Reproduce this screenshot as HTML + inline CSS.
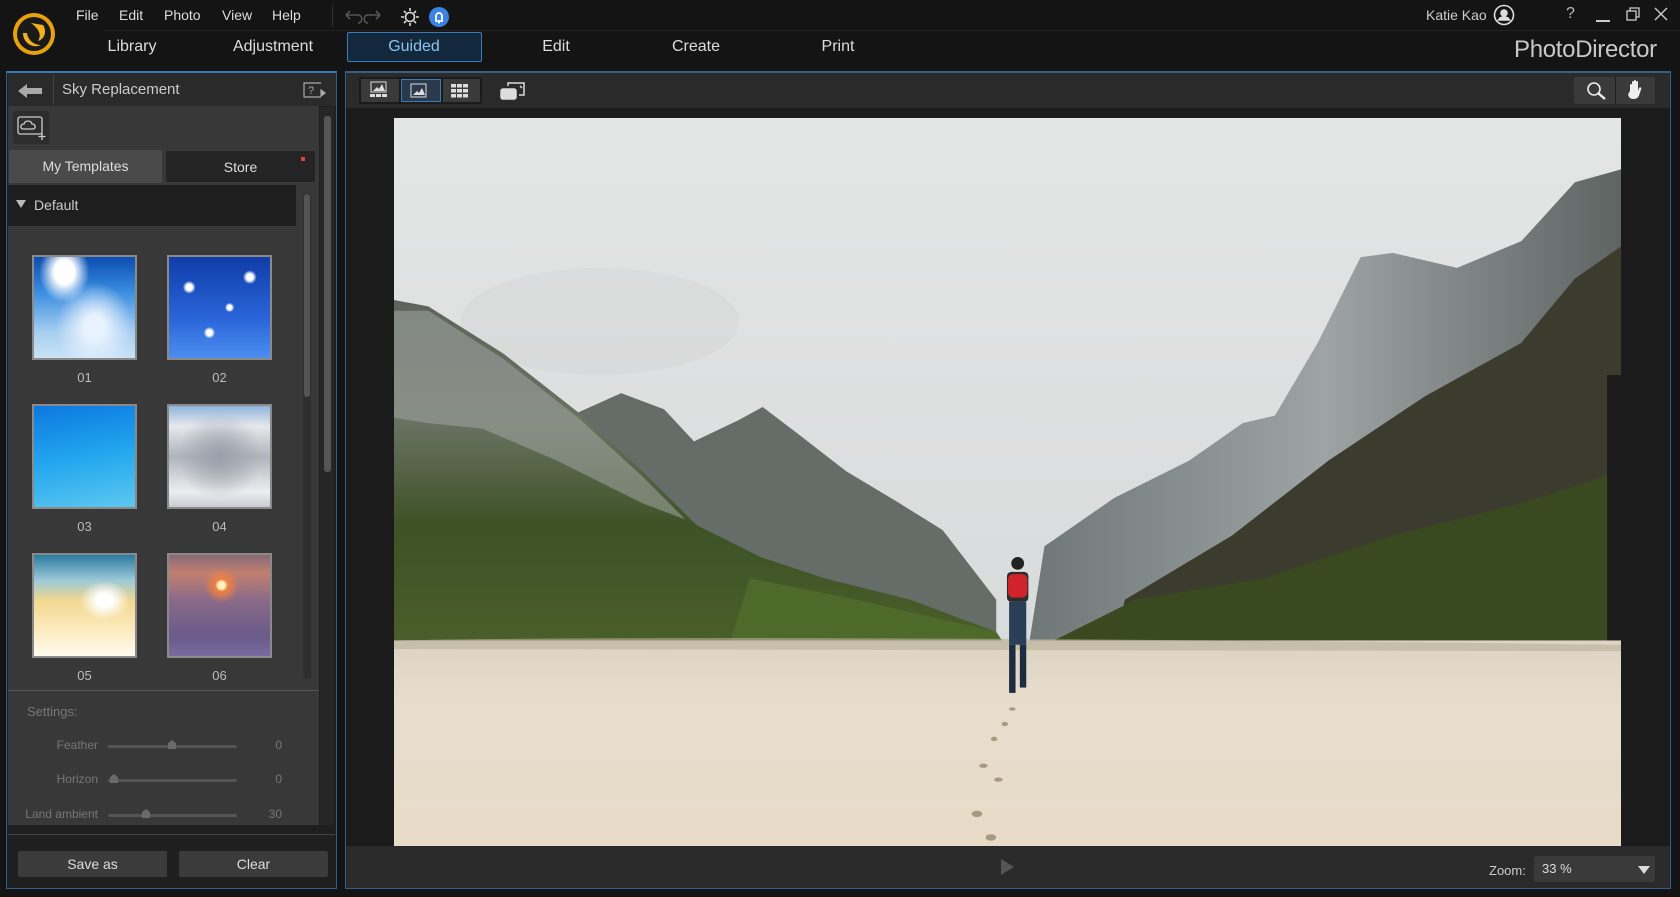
<!DOCTYPE html>
<html><head><meta charset="utf-8"><style>
*{margin:0;padding:0;box-sizing:border-box}
body{width:1680px;height:897px;background:#141414;font-family:"Liberation Sans",sans-serif;color:#ddd;position:relative;overflow:hidden}
.a{position:absolute}
.menu{top:7px;font-size:14px;color:#ddd}
.tab{top:38px;font-size:16px;color:#ddd;transform:translateX(-50%)}
.thumb{position:absolute;width:105px;height:105px;border:2px solid #8a8a8a}
.lbl{position:absolute;font-size:13px;color:#bbb;width:105px;text-align:center}
.sl{position:absolute;left:108px;width:129px;height:3px;background:#555;border-radius:2px}
.knob{position:absolute;width:8px;height:9px;background:#6a6a6a;top:-5px;clip-path:polygon(50% 0,100% 35%,100% 100%,0 100%,0 35%)}
.sn{position:absolute;font-size:12px;color:#777;text-align:right;width:80px;left:18px}
.sv{position:absolute;font-size:12px;color:#777;left:260px;width:22px;text-align:right}
.btn{position:absolute;background:#3b3b3b;border-radius:2px;font-size:14px;color:#ddd;text-align:center;line-height:26px}
</style></head><body>
<svg class="a" style="left:11px;top:11px" width="46" height="46" viewBox="0 0 46 46">
<circle cx="23" cy="23" r="21" fill="#e8a20c"/><circle cx="23" cy="23" r="17" fill="#1a1a1a"/>
<path d="M12 22 C12 32 22 38 30 34 C24 34 17 30 16 22Z" fill="#f2b01e"/>
<path d="M20 12 L32 14 C36 20 34 28 27 30 C31 24 28 18 20 12Z" fill="#f2b01e"/>
</svg>
<div class="a menu" style="left:76px">File</div>
<div class="a menu" style="left:119px">Edit</div>
<div class="a menu" style="left:164px">Photo</div>
<div class="a menu" style="left:222px">View</div>
<div class="a menu" style="left:272px">Help</div>
<div class="a" style="left:332px;top:5px;width:1px;height:22px;background:#333"></div>
<div class="a" style="left:104px;top:30px;width:1576px;height:1px;background:#222"></div>
<svg class="a" style="left:342px;top:7px" width="110" height="20" viewBox="0 0 110 20" fill="none" stroke="#555" stroke-width="1.6">
<path d="M4 8 L16 8 C21 8 21 16 16 16 M4 8 L8 4 M4 8 L8 12"/>
<path d="M38 8 L26 8 C21 8 21 16 26 16 M38 8 L34 4 M38 8 L34 12"/>
<g stroke="#ddd"><circle cx="68" cy="10" r="4.5"/><path d="M68 1v3M68 16v3M59 10h3M74 10h3M62 4l2 2M72 14l2 2M62 16l2-2M72 6l2-2"/></g>
<circle cx="97" cy="10" r="10" fill="#3b82e6" stroke="none"/>
<path d="M93 14h8M94 13v-4a3 3 0 0 1 6 0v4M96 15.5h2" stroke="#fff" stroke-width="1.8"/>
</svg>
<div class="a tab" style="left:132px">Library</div>
<div class="a tab" style="left:273px">Adjustment</div>
<div class="a" style="left:347px;top:32px;width:135px;height:30px;border:1px solid #3d7ab8;background:#13283d;border-radius:2px"></div>
<div class="a tab" style="left:414px;color:#8fc3ef">Guided</div>
<div class="a tab" style="left:556px">Edit</div>
<div class="a tab" style="left:696px">Create</div>
<div class="a tab" style="left:838px">Print</div>
<div class="a" style="left:1426px;top:7px;font-size:14px;color:#ccc">Katie Kao</div>
<svg class="a" style="left:1493px;top:4px" width="22" height="22" viewBox="0 0 22 22" fill="none" stroke="#ddd" stroke-width="1.6"><circle cx="11" cy="11" r="9.5"/><circle cx="11" cy="9" r="3" fill="#ddd"/><path d="M5.5 16 C7 12 15 12 16.5 16Z" fill="#ddd"/></svg>
<div class="a" style="left:1566px;top:5px;font-size:16px;color:#bbb">?</div>
<div class="a" style="left:1596px;top:20px;width:14px;height:1.5px;background:#ccc"></div>
<svg class="a" style="left:1625px;top:6px" width="16" height="16" fill="none" stroke="#ccc" stroke-width="1.3"><rect x="2" y="5" width="9" height="9"/><path d="M5 5V2h9v9h-3"/></svg>
<svg class="a" style="left:1653px;top:6px" width="16" height="16" stroke="#ccc" stroke-width="1.4"><path d="M2 2L14 14M14 2L2 14"/></svg>
<div class="a" style="left:1514px;top:36px;font-size:24px;color:#c8c8c8;letter-spacing:-0.3px">PhotoDirector</div>

<div class="a" style="left:6px;top:71px;width:331px;height:818px;border:1px solid #2d5f90;border-top:2px solid #3b78b8;background:#1f1f1f"></div>
<div class="a" style="left:8px;top:73px;width:328px;height:33px;background:#2a2a2a"></div>
<div class="a" style="left:53px;top:75px;width:1px;height:30px;background:#444"></div>
<svg class="a" style="left:18px;top:84px" width="24" height="14"><path d="M0 7 L9 0 V4 H24 V10 H9 V14Z" fill="#aaa"/></svg>
<div class="a" style="left:62px;top:81px;font-size:15px;color:#ccc">Sky Replacement</div>
<svg class="a" style="left:303px;top:80px" width="24" height="20" fill="none" stroke="#aaa" stroke-width="1.2"><path d="M18 3H1v14h17"/><text x="5" y="14" font-size="11" fill="#aaa" stroke="none" font-family="Liberation Sans">?</text><path d="M18 10 l4 3 -4 3z" fill="#aaa"/></svg>
<div class="a" style="left:8px;top:106px;width:311px;height:585px;background:#383838"></div>
<div class="a" style="left:13px;top:111px;width:36px;height:33px;background:#2d2d2d;border-radius:2px"></div>
<svg class="a" style="left:17px;top:115px" width="30" height="26" fill="none" stroke="#ccc" stroke-width="1.3"><rect x="1" y="2" width="24" height="17" rx="2"/><path d="M6 14 C3 14 3 9 7 9 C8 5 14 5 15 9 C19 9 19 14 16 14Z"/><path d="M25 18v7M21.5 21.5h7"/></svg>
<div class="a" style="left:9px;top:150px;width:153px;height:33px;background:#4a4a4a;border-radius:2px 2px 0 0;font-size:14px;text-align:center;line-height:33px;color:#ddd">My Templates</div>
<div class="a" style="left:165px;top:150px;width:151px;height:33px;background:#242424;border:1px solid #3a3a3a;font-size:14px;text-align:center;line-height:33px;color:#ddd">Store</div>
<div class="a" style="left:301px;top:157px;width:4px;height:4px;background:#e04040"></div>
<div class="a" style="left:8px;top:185px;width:288px;height:41px;background:#1e1e1e"></div>
<div class="a" style="left:16px;top:200px;width:0;height:0;border-left:5px solid transparent;border-right:5px solid transparent;border-top:8px solid #bbb"></div>
<div class="a" style="left:34px;top:197px;font-size:14px;color:#ccc">Default</div>
<div class="a" style="left:303px;top:193px;width:8px;height:486px;background:#2e2e2e;border-radius:3px"></div>
<div class="a" style="left:304px;top:194px;width:6px;height:203px;background:#555;border-radius:3px"></div>
<div class="a" style="left:320px;top:107px;width:14px;height:718px;background:#262626"></div>
<div class="a" style="left:324px;top:116px;width:7px;height:356px;background:#555;border-radius:3px"></div>

<div class="thumb" style="left:32px;top:255px;background:radial-gradient(ellipse at 30% 15%,#fff 0 10%,transparent 25%),radial-gradient(ellipse at 60% 70%,#e8f2ff 0 12%,transparent 45%),linear-gradient(#0b4db0,#3b8ee0 35%,#a7cff0 75%,#c9e2f6)"></div>
<div class="thumb" style="left:167px;top:255px;background:radial-gradient(circle at 20% 30%,#fff 0 3%,transparent 6%),radial-gradient(circle at 60% 50%,#fff 0 3%,transparent 6%),radial-gradient(circle at 80% 20%,#fff 0 3%,transparent 6%),radial-gradient(circle at 40% 75%,#fff 0 3%,transparent 6%),linear-gradient(#0f3ca8,#2a64d8 60%,#4c8ef0)"></div>
<div class="lbl" style="left:32px;top:370px">01</div><div class="lbl" style="left:167px;top:370px">02</div>
<div class="thumb" style="left:32px;top:404px;background:linear-gradient(170deg,#0c78e0,#22a6ee 50%,#5cc8f0)"></div>
<div class="thumb" style="left:167px;top:404px;background:radial-gradient(ellipse at 50% 50%,#9aa0aa,transparent 60%),linear-gradient(#8fb4dc,#e6e8ec 20%,#b0b4bc 50%,#eceef0 85%,#c8ccd2)"></div>
<div class="lbl" style="left:32px;top:519px">03</div><div class="lbl" style="left:167px;top:519px">04</div>
<div class="thumb" style="left:32px;top:553px;background:radial-gradient(ellipse at 70% 45%,#fff 0 8%,transparent 25%),linear-gradient(#2a7ca0,#9cc8d8 25%,#f2d890 45%,#fbe8b8 70%,#fffbee)"></div>
<div class="thumb" style="left:167px;top:553px;background:radial-gradient(circle at 52% 30%,#fff2c0 0 4%,#f08040 7%,transparent 20%),linear-gradient(#8a6a78,#c08070 18%,#8a6a88 45%,#6a5a8a 80%,#7a6aa0)"></div>
<div class="lbl" style="left:32px;top:668px">05</div><div class="lbl" style="left:167px;top:668px">06</div>

<div class="a" style="left:8px;top:690px;width:311px;height:1px;background:#555"></div>
<div class="a" style="left:8px;top:691px;width:311px;height:134px;background:#383838"></div>
<div class="a" style="left:27px;top:704px;font-size:13px;color:#777">Settings:</div>
<div class="sn" style="top:738px">Feather</div><div class="sl" style="top:745px"><div class="knob" style="left:60px"></div></div><div class="sv" style="top:738px">0</div>
<div class="sn" style="top:772px">Horizon</div><div class="sl" style="top:779px"><div class="knob" style="left:2px"></div></div><div class="sv" style="top:772px">0</div>
<div class="sn" style="top:807px">Land ambient</div><div class="sl" style="top:814px"><div class="knob" style="left:34px"></div></div><div class="sv" style="top:807px">30</div>
<div class="a" style="left:8px;top:834px;width:327px;height:1px;background:#444"></div>
<div class="btn" style="left:18px;top:851px;width:149px">Save as</div>
<div class="btn" style="left:179px;top:851px;width:149px">Clear</div>

<div class="a" style="left:345px;top:71px;width:1326px;height:818px;border:1px solid #2d5f90;border-top:2px solid #3b5f88;background:#2a2a2a"></div>
<div class="a" style="left:359px;top:77px;width:123px;height:27px;background:#1b1b1b;border-radius:2px"></div>
<div class="a" style="left:361px;top:79px;width:38px;height:23px;background:#3a3a3a"></div>
<div class="a" style="left:401px;top:79px;width:40px;height:23px;background:#2a3a4c;border:1px solid #3d7ab8"></div>
<div class="a" style="left:443px;top:79px;width:37px;height:23px;background:#3a3a3a"></div>
<svg class="a" style="left:368px;top:81px" width="110" height="19" fill="#ddd">
<rect x="3" y="1" width="15" height="10" fill="none" stroke="#ddd"/><path d="M5 10l4-4 2 2 3-5 3 7z"/><rect x="2" y="13" width="5" height="3"/><rect x="8" y="13" width="5" height="3"/><rect x="14" y="13" width="5" height="3"/>
<rect x="43" y="3" width="15" height="13" fill="none" stroke="#ddd"/><path d="M45 14l4-4 2 2 3-5 3 7z"/>
<g><rect x="83" y="3" width="5" height="3.5"/><rect x="89" y="3" width="5" height="3.5"/><rect x="95" y="3" width="5" height="3.5"/><rect x="83" y="8" width="5" height="3.5"/><rect x="89" y="8" width="5" height="3.5"/><rect x="95" y="8" width="5" height="3.5"/><rect x="83" y="13" width="5" height="3.5"/><rect x="89" y="13" width="5" height="3.5"/><rect x="95" y="13" width="5" height="3.5"/></g>
</svg>
<svg class="a" style="left:500px;top:81px" width="26" height="20" fill="none" stroke="#ddd" stroke-width="1.5"><rect x="1" y="8" width="15" height="10" rx="2" fill="#ddd"/><path d="M8 5V2h16v12h-5"/><path d="M20 5l2 2" /></svg>
<div class="a" style="left:1574px;top:77px;width:81px;height:27px;background:#3a3a3a;border-radius:2px"></div>
<div class="a" style="left:1615px;top:77px;width:1px;height:27px;background:#1e1e1e"></div>
<svg class="a" style="left:1585px;top:80px" width="24" height="22" fill="none" stroke="#eee" stroke-width="1.6"><circle cx="9" cy="9" r="6"/><path d="M13 13l7 6" stroke-width="2.4"/></svg>
<svg class="a" style="left:1625px;top:79px" width="22" height="22" fill="#eee"><path d="M5 12V6a1 1 0 0 1 2 0v5V3a1 1 0 0 1 2 0v8V2a1 1 0 0 1 2 0v9V3a1 1 0 0 1 2 0v9l1-3a1.2 1.2 0 0 1 2.2 1l-2 6c-1 3-3 4-6 4s-5-2-5-5z"/></svg>
<div class="a" style="left:346px;top:108px;width:1324px;height:738px;background:#1b1b1b"></div>
<svg class="a" style="left:394px;top:118px" width="1227" height="728" viewBox="368 110 1145 680" preserveAspectRatio="none">
<defs>
<linearGradient id="sky" x1="0" y1="0" x2="0" y2="1"><stop offset="0" stop-color="#e4e6e6"/><stop offset="1" stop-color="#d4d7d7"/></linearGradient>
<linearGradient id="sand" x1="0" y1="0" x2="0" y2="1"><stop offset="0" stop-color="#ddd3c2"/><stop offset=".3" stop-color="#e6ddcd"/><stop offset="1" stop-color="#e8dcc8"/></linearGradient>
<linearGradient id="lg" x1="0" y1="0" x2="0" y2="1"><stop offset="0" stop-color="#5e645c"/><stop offset=".35" stop-color="#6a7262"/><stop offset=".65" stop-color="#3d5226"/><stop offset="1" stop-color="#4a5f2a"/></linearGradient>
<linearGradient id="rg" x1="0" y1="0" x2="1" y2="0"><stop offset="0" stop-color="#6e7676"/><stop offset=".5" stop-color="#9ea4a4"/><stop offset="1" stop-color="#5e6462"/></linearGradient>
</defs>
<rect x="368" y="110" width="1145" height="680" fill="url(#sky)"/>
<ellipse cx="560" cy="300" rx="130" ry="50" fill="#cdd0d0" opacity=".35"/>
<path d="M540 385 L580 367 L620 382 L648 412 L690 392 L712 380 L745 405 L790 440 L840 470 L880 495 L930 560 L930 605 L540 605Z" fill="#666c68"/>
<path d="M368 280 L400 286 L470 330 L540 385 L600 440 L650 490 L710 520 L770 540 L850 560 L930 590 L930 605 L368 605Z" fill="url(#lg)"/>
<path d="M368 290 L400 290 L470 335 L540 390 L600 445 L640 485 L600 470 L520 430 L450 400 L400 395 L368 390Z" fill="#a0a6a2" opacity=".55"/>
<path d="M960 605 L975 510 L1040 465 L1110 430 L1160 395 L1190 388 L1230 320 L1270 240 L1300 236 L1360 250 L1420 225 L1470 170 L1513 158 L1513 605Z" fill="url(#rg)"/>
<path d="M1050 560 L1150 500 L1240 430 L1330 370 L1420 320 L1470 260 L1513 230 L1513 605 L1040 605Z" fill="#3c3c2e"/>
<path d="M980 600 L1060 560 L1180 540 L1300 500 L1420 470 L1513 440 L1513 605Z" fill="#3a4a20"/>
<path d="M700 540 L800 560 L930 590 L940 605 L680 605Z" fill="#4e6a2a"/>
<rect x="1500" y="350" width="13" height="255" fill="#1b1b1b"/>
<rect x="368" y="598" width="1145" height="192" fill="url(#sand)"/>
<path d="M368 598 Q700 592 1513 602 L1513 608 L368 606Z" fill="#b9b09a" opacity=".6"/>
<g transform="translate(950 520)">
<circle cx="0" cy="6" r="6" fill="#222"/>
<rect x="-10" y="14" width="20" height="28" rx="4" fill="#2a2e30"/>
<rect x="-9" y="16" width="18" height="22" rx="5" fill="#d0242a"/>
<rect x="-8" y="42" width="16" height="40" fill="#2a3e58"/>
<rect x="-8" y="82" width="6" height="45" fill="#1e2c40"/><rect x="2" y="82" width="6" height="40" fill="#1e2c40"/>
</g>
<g fill="#a89a80"><ellipse cx="912" cy="760" rx="5" ry="3"/><ellipse cx="925" cy="782" rx="5" ry="3"/><ellipse cx="918" cy="715" rx="4" ry="2"/><ellipse cx="932" cy="728" rx="4" ry="2"/><ellipse cx="928" cy="690" rx="3" ry="2"/><ellipse cx="938" cy="676" rx="3" ry="2"/><ellipse cx="945" cy="662" rx="3" ry="1.5"/></g>
</svg>
<div class="a" style="left:346px;top:846px;width:1324px;height:42px;background:#2a2a2a"></div>
<div class="a" style="left:1001px;top:859px;width:0;height:0;border-top:8px solid transparent;border-bottom:8px solid transparent;border-left:13px solid #555"></div>
<div class="a" style="left:1489px;top:863px;font-size:13px;color:#ccc">Zoom:</div>
<div class="a" style="left:1534px;top:856px;width:121px;height:26px;background:#3a3a3a;border-radius:2px;font-size:13px;color:#ddd;line-height:26px;padding-left:8px">33 %</div>
<div class="a" style="left:1638px;top:866px;width:0;height:0;border-left:6px solid transparent;border-right:6px solid transparent;border-top:8px solid #ddd"></div>
</body></html>
